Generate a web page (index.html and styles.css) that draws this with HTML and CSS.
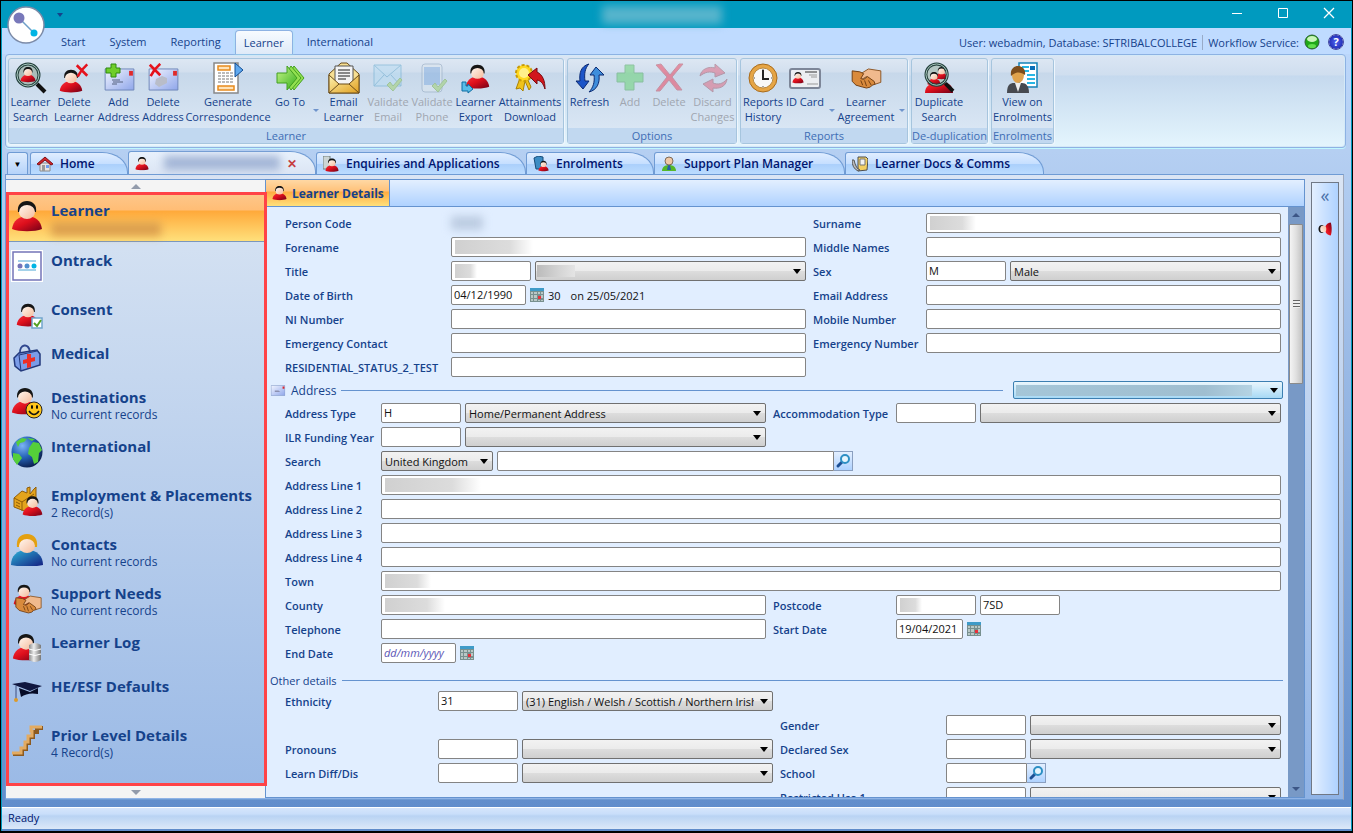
FILE: index.html
```
<!DOCTYPE html>
<html lang="en">
<head>
    <meta charset="UTF-8">
    <meta name="viewport" content="width=device-width, initial-scale=1.0">
    <title>Learner Details</title>
    <link rel="stylesheet" href="styles.css">
</head>
<body>
    <!-- shared icons -->
    <svg class="defs" width="0" height="0" aria-hidden="true">
        <defs>
            <linearGradient id="g-red" x1="0" y1="0" x2="1" y2="1">
                <stop offset="0" stop-color="#f8333c"/><stop offset=".45" stop-color="#dd0f1c"/><stop offset="1" stop-color="#700018"/>
            </linearGradient>
            <linearGradient id="g-face" x1="0" y1="0" x2="1" y2="1">
                <stop offset="0" stop-color="#fff6ee"/><stop offset="1" stop-color="#f5bb9a"/>
            </linearGradient>
            <linearGradient id="g-env" x1="0" y1="0" x2="1" y2="1">
                <stop offset="0" stop-color="#f2f5ff"/><stop offset="1" stop-color="#8fa6ea"/>
            </linearGradient>
            <linearGradient id="g-gold" x1="0" y1="0" x2="1" y2="1">
                <stop offset="0" stop-color="#fff3b0"/><stop offset="1" stop-color="#e0a020"/>
            </linearGradient>
            <linearGradient id="g-blue" x1="0" y1="0" x2="1" y2="1">
                <stop offset="0" stop-color="#2bb3d8"/><stop offset="1" stop-color="#141c80"/>
            </linearGradient>
            <linearGradient id="g-green" x1="0" y1="0" x2="1" y2="1">
                <stop offset="0" stop-color="#c8f58a"/><stop offset="1" stop-color="#35b01c"/>
            </linearGradient>
            <linearGradient id="g-grey" x1="0" y1="0" x2="1" y2="0">
                <stop offset="0" stop-color="#8b8b8b"/><stop offset=".4" stop-color="#ededed"/><stop offset="1" stop-color="#777"/>
            </linearGradient>
            <radialGradient id="g-globe" cx=".35" cy=".3" r=".75">
                <stop offset="0" stop-color="#7db4f5"/><stop offset=".5" stop-color="#2563b8"/><stop offset="1" stop-color="#0a1c4a"/>
            </radialGradient>
            <symbol id="person" viewBox="0 0 32 32">
                <path d="M1 29C2 21 8 16 16 16s14 5 15 13c-7 3-23 3-30 0z" fill="url(#g-red)"/>
                <path d="M7 12C6 5 10 1 16 1s10 4 9 11z" fill="#151515"/>
                <ellipse cx="16" cy="12" rx="8" ry="7" fill="url(#g-face)"/>
            </symbol>
            <symbol id="cross" viewBox="0 0 16 16">
                <path d="M2 2l12 12M14 1Q7 7 3 15" fill="none" stroke="#e5121c" stroke-width="3"/>
            </symbol>
            <symbol id="tick" viewBox="0 0 16 16">
                <path d="M1 9l3-3 3 4 7-8 2 2-9 11z" fill="#9ccf6a" stroke="#74ad4a"/>
            </symbol>
            <symbol id="envelope" viewBox="0 0 32 24">
                <path d="M1 1h30v22H1z" fill="url(#g-env)" stroke="#6f86b8"/>
                <path d="M26 3h4v5h-4z" fill="#e02a2a"/>
            </symbol>
            <symbol id="lens" viewBox="0 0 32 32">
                <path d="M22 22l8 8" stroke="#111" stroke-width="4"/>
                <circle cx="13" cy="13" r="11" fill="none" stroke="#24403c" stroke-width="3"/>
                <circle cx="13" cy="13" r="11" fill="none" stroke="#a9c8bf"/>
            </symbol>
            <symbol id="hands" viewBox="0 0 32 22">
                <path d="M31 3L18 1l-8 5-3 4 4 2 5-3 9 8 6-2z" fill="#f0b98d" stroke="#8a5424"/>
                <path d="M1 3l8 1 4 2-3 5 3 1 4-3 7 5 1 3-3 1-2 2-4 1-4-1-7-2-4-4H1z" fill="#d98a3c" stroke="#6f3d12"/>
                <path d="M10 13l2 5M14 13l2 6M18 13l3 5" stroke="#6f3d12" fill="none"/>
            </symbol>
            <symbol id="calendar" viewBox="0 0 14 14">
                <path d="M0 0h14v14H0z" fill="#78908f"/>
                <path d="M0 0h14v3H0z" fill="#3f9bc8"/>
                <path d="M1 4h2v2H1zM4 4h3v2H4zM8 4h2v2H8zM11 4h2v2h-2zM1 7h2v3H1zM4 7h3v3H4zM1 11h2v2H1zM4 11h3v2H4zM11 7h2v3h-2zM8 12h2v1H8zM11 12h2v1h-2z" fill="#b9c8c6"/>
                <path d="M8 8h3v3H8z" fill="#e8303a"/>
            </symbol>
            <symbol id="search" viewBox="0 0 16 16">
                <path d="M3 13l4-4" stroke="#1c4f94" stroke-width="3" stroke-linecap="round"/>
                <circle cx="10" cy="6" r="4" fill="#e6f5fd" stroke="#2d8fc4" stroke-width="2"/>
            </symbol>
        </defs>
    </svg>

    <div class="window">
        <header class="titlebar">
            <span class="quick-access"></span>
            <span class="smudge smudge-title"></span>
            <div class="window-buttons">
                <button type="button" aria-label="Minimise"><svg width="12" height="12"><path d="M1 6.500h10" stroke="#fff"/></svg></button>
                <button type="button" aria-label="Maximise"><svg width="12" height="12"><path d="M1.500 1.500h9v9h-9z" fill="none" stroke="#fff"/></svg></button>
                <button type="button" aria-label="Close"><svg width="12" height="12"><path d="M1 1l10 10M11 1L1 11" stroke="#fff" stroke-width="1.300"/></svg></button>
            </div>
        </header>
        <button class="app-button" type="button" aria-label="Application menu">
            <svg width="38" height="38" viewBox="0 0 38 38">
                <circle cx="19" cy="19" r="18" fill="#fff" stroke="#7c8ba8" stroke-width="1.500"/>
                <path d="M12 12l15 15" stroke="#6f9fc8" stroke-width="1.500"/>
                <circle cx="12" cy="12" r="5.500" fill="#7878ba"/><circle cx="27" cy="27" r="3.500" fill="#00b4e4"/>
            </svg>
        </button>

        <nav class="ribbon-tabs">
            <a href="#">Start</a>
            <a href="#">System</a>
            <a href="#">Reporting</a>
            <a href="#" class="active">Learner</a>
            <a href="#">International</a>
            <div class="session">
                <span>User: webadmin, Database: SFTRIBALCOLLEGE</span>
                <span class="service">Workflow Service:</span>
                <svg width="16" height="16" viewBox="0 0 16 16"><circle cx="8" cy="8" r="7" fill="#20a818" stroke="#2c5f30"/><ellipse cx="8" cy="5" rx="5" ry="3" fill="#c9f5b8"/><ellipse cx="8" cy="12" rx="4" ry="2" fill="#5fe04a"/></svg>
                <button class="help" type="button" aria-label="Help">?</button>
            </div>
        </nav>

        <div class="ribbon">
            <section class="group">
                <div class="tools tools-learner">
                    <button type="button"><svg viewBox="0 0 32 32"><circle cx="13" cy="13" r="10" fill="#a9bdb9"/><use href="#person" x="5" y="4" width="16" height="17"/><use href="#lens" width="32" height="32"/></svg>Learner<br>Search</button>
                    <button type="button"><svg viewBox="0 0 32 32"><use href="#person" x="1" y="7" width="24" height="24"/><use href="#cross" x="17" y="1" width="14" height="15"/></svg>Delete<br>Learner</button>
                    <button type="button"><svg viewBox="0 0 32 32"><use href="#envelope" x="1" y="6" width="31" height="23"/><path d="M9 18h8M10 20h10M9 22h5" stroke="#55617e"/><path d="M8 2h5v4h4v5h-4v4H8v-4H3V6h5z" fill="#6fce2b" stroke="#2f8a10"/></svg>Add<br>Address</button>
                    <button type="button"><svg viewBox="0 0 32 32"><use href="#envelope" x="1" y="6" width="31" height="23"/><path d="M9 17l6-3 5 2v5l-8 4-4-3z" fill="#b9bdc9"/><use href="#cross" x="1" y="1" width="14" height="14"/></svg>Delete<br>Address</button>
                    <button type="button"><svg viewBox="0 0 32 32"><path d="M2 1h24v30H2z" fill="#fff" stroke="#888" stroke-width="1.500"/><path d="M6 4h12v4H6zM6 24h16v4H6z" fill="#ffe3b8" stroke="#e88a1c" stroke-width="1.500"/><path d="M6 11h16M6 14h16M6 17h16M6 20h16" stroke="#777" stroke-dasharray="3 1"/><path d="M23 1l8 7-8 7z" fill="#5fa8ee" stroke="#104c94"/></svg>Generate<br>Correspondence</button>
                    <button type="button" class="has-menu"><svg viewBox="0 0 32 32"><path d="M20 4l10 12-10 12-2-3 7-9-7-9z" fill="#93e051" stroke="#43a020"/><path d="M17 4l10 12-10 12-2-3 7-9-7-9z" fill="#93e051" stroke="#43a020"/><path d="M3 11h10V4l10 12-10 12v-7H3z" fill="url(#g-green)" stroke="#43a020"/></svg>Go To</button>
                    <button type="button"><svg viewBox="0 0 32 32"><path d="M1 12L13 1h6l12 11v19H1z" fill="#f7df92" stroke="#6b4c1a"/><path d="M7 4h18v19H7z" fill="#f4f4f4" stroke="#555"/><path d="M10 8h12M10 11h12M10 14h12M10 17h8" stroke="#666" stroke-width="1.500"/><path d="M1 13l10 9h10l10-9v18H1z" fill="url(#g-gold)" stroke="#6b4c1a"/><path d="M1 31l10-9M31 31l-10-9" stroke="#6b4c1a"/></svg>Email<br>Learner</button>
                    <button type="button" disabled><svg viewBox="0 0 32 32"><path d="M2 3h27v21H2z" fill="#b8dcf2" stroke="#5fa6cc"/><path d="M2 3l13 12L29 3M2 24l10-11M29 24L19 13" fill="none" stroke="#5fa6cc"/><use href="#tick" x="13" y="14" width="18" height="16"/></svg>Validate<br>Email</button>
                    <button type="button" disabled><svg viewBox="0 0 32 32"><rect x="6" y="2" width="20" height="28" rx="3" fill="#dce6ee" stroke="#8aa0b8"/><path d="M8 5h16v18H8z" fill="#84aee0"/><use href="#tick" x="14" y="15" width="18" height="16"/></svg>Validate<br>Phone</button>
                    <button type="button"><svg viewBox="0 0 32 32"><use href="#person" x="5" y="2" width="25" height="25"/><path d="M2 20v9h6v2l5-4-5-5v2H6v-4z" fill="#59bce8" stroke="#0f6fa4"/></svg>Learner<br>Export</button>
                    <button type="button"><svg viewBox="0 0 32 32"><path d="M6 16L2 27l4-1 3 3 2-10 4 9 2-3-4-9z" fill="#f0c21a" stroke="#a98205"/><circle cx="10" cy="11" r="8" fill="#ffd81f" stroke="#c79a08" stroke-width="2" stroke-dasharray="3 2"/><circle cx="10" cy="11" r="5" fill="#fff08a"/><path d="M14 13l9-7v4c6 3 8 9 8 17-2-6-4-8-8-9v4z" fill="#d2161c" stroke="#780a10"/></svg>Attainments<br>Download</button>
                </div>
                <h2>Learner</h2>
            </section>
            <section class="group">
                <div class="tools tools-options">
                    <button type="button"><svg viewBox="0 0 32 32"><path d="M15 2C7 4 5 11 6 19H2l7 8 6-8h-4c-1-7 0-13 4-17z" fill="#1c55c8" stroke="#0c2a72"/><path d="M15 30c8-2 11-9 10-17h5L22 5l-6 8h4c1 7-1 13-5 17z" fill="#3f8edc" stroke="#0c2a72"/></svg>Refresh</button>
                    <button type="button" disabled><svg viewBox="0 0 32 32"><path d="M11 3h9v8h9v9h-9v8h-9v-8H3v-9h8z" fill="#62d46c" stroke="#4aa558"/></svg>Add</button>
                    <button type="button" disabled><svg viewBox="0 0 32 32"><path d="M3 3l5-1 9 11 9-11h4L19 15l10 13h-5l-8-10-9 11H3l11-14z" fill="#f03a55" stroke="#b84a5a"/></svg>Delete</button>
                    <button type="button" disabled><svg viewBox="0 0 32 32"><path d="M3 14c1-7 9-10 15-8V2l10 9-10 4v-4c-5-2-10-1-15 3z" fill="#e0607a" stroke="#9a5666"/><path d="M30 17c-1 8-8 10-14 9v4L6 22l10-5v4c5 2 10 1 14-4z" fill="#e0607a" stroke="#9a5666"/></svg>Discard<br>Changes</button>
                </div>
                <h2>Options</h2>
            </section>
            <section class="group">
                <div class="tools tools-reports">
                    <button type="button"><svg viewBox="0 0 32 32"><circle cx="16" cy="16" r="14" fill="#e6a545" stroke="#a86b1c"/><circle cx="16" cy="16" r="10" fill="#f8f8f8" stroke="#b98a44"/><path d="M16 8v9h6" fill="none" stroke="#222" stroke-width="2"/><path d="M16 7v1M16 24v1M7 16h1M24 16h1" stroke="#555"/></svg>Reports<br>History</button>
                    <button type="button" class="has-menu"><svg viewBox="0 0 32 32"><rect x="1" y="7" width="30" height="19" rx="2" fill="#eceef2" stroke="#7d8698" stroke-width="2"/><use href="#person" x="3" y="9" width="12" height="13"/><path d="M16 10h12" stroke="#333"/><path d="M20 13h8M22 15h6M18 22h11" stroke="#999"/></svg>ID Card</button>
                    <button type="button" class="has-menu"><svg viewBox="0 0 32 32"><use href="#hands" x="1" y="6" width="31" height="21"/></svg>Learner<br>Agreement</button>
                </div>
                <h2>Reports</h2>
            </section>
            <section class="group">
                <div class="tools tools-duplicates">
                    <button type="button"><svg viewBox="0 0 32 32"><path d="M2 31c0-7 5-10 12-10h9c5 1 7 5 7 10z" fill="url(#g-red)"/><circle cx="14" cy="13" r="11" fill="#b3c6c3"/><use href="#person" x="12" y="3" width="13" height="16"/><use href="#person" x="4" y="9" width="14" height="15"/><use href="#lens" x="1" width="31" height="31"/></svg>Duplicate<br>Search</button>
                </div>
                <h2>De-duplication</h2>
            </section>
            <section class="group">
                <div class="tools tools-enrolments">
                    <button type="button"><svg viewBox="0 0 32 32"><path d="M13 1h18v24H13z" fill="#fff" stroke="#1682b8" stroke-width="1.500"/><path d="M16 5h7M16 9h7M21 13h8M21 17h8M21 21h8" stroke="#27b6e4" stroke-width="2"/><path d="M24 4h5v4h-5z" fill="#0c6fb8"/><path d="M1 31c0-8 3-10 7-10h8c4 0 7 3 7 10z" fill="#474a50"/><path d="M9 21h6l-3 9z" fill="#eee"/><ellipse cx="12" cy="13" rx="6" ry="8" fill="#e0a24c"/><path d="M5 14C4 7 8 4 12 4s8 3 7 9c-4-3-9-4-14 1z" fill="#7d4d1c"/></svg>View on<br>Enrolments</button>
                </div>
                <h2>Enrolments</h2>
            </section>
        </div>

        <nav class="doc-tabs">
            <button type="button" class="doc-list" aria-label="Open documents">▼</button>
            <a href="#" class="doc-tab doc-home"><svg viewBox="0 0 16 16"><path d="M3 7h10v8H3z" fill="#e9e4e0" stroke="#8a8a8a"/><path d="M0 8l8-7 8 7-2 1-6-5-6 5z" fill="#d3252b" stroke="#7e1014"/><path d="M5 9h3v6H5z" fill="#9a9a9a"/><path d="M9 9h3v3H9z" fill="#6f9fee"/></svg>Home</a>
            <a href="#" class="doc-tab doc-person active"><svg viewBox="0 0 16 16"><use href="#person" width="16" height="16"/></svg><span class="smudge smudge-tab"></span><span class="close">✕</span></a>
            <a href="#" class="doc-tab doc-enquiries"><svg viewBox="0 0 16 16"><path d="M0 0h7v13H0z" fill="#ccd5d5" stroke="#72807f"/><use href="#person" x="2" y="2" width="14" height="14"/></svg>Enquiries and Applications</a>
            <a href="#" class="doc-tab doc-enrolments"><svg viewBox="0 0 16 16"><path d="M1 2l4-2 5 1v12H3z" fill="#3c8cc4" stroke="#174b78"/><use href="#person" x="5" y="4" width="11" height="12"/></svg>Enrolments</a>
            <a href="#" class="doc-tab doc-support"><svg viewBox="0 0 16 16"><path d="M1 15c0-4 3-6 7-6s7 2 7 6z" fill="#55b82a"/><path d="M7 9h2l1 5H6z" fill="#2560a8"/><circle cx="8" cy="5" r="4" fill="#f0c8a6" stroke="#7d6a58"/></svg>Support Plan Manager</a>
            <a href="#" class="doc-tab doc-comms"><svg viewBox="0 0 16 16"><path d="M6 1h8l2 2-1 11-9 1z" fill="#f3cf62" stroke="#4d4d4d"/><path d="M8 3h5v6H8z" fill="#f2f2f2" stroke="#777"/><path d="M2 4q2 9 6 10l-2 1q-6-3-6-11z" fill="#bbb" stroke="#555"/></svg>Learner Docs &amp; Comms</a>
        </nav>

        <main class="workspace">
            <aside class="sidebar">
                <button type="button" class="scroller" aria-label="Scroll up"><span class="arrow-up"></span></button>
                <nav class="sections">
                    <a href="#" class="active"><svg viewBox="0 0 32 32"><use href="#person" width="32" height="32"/></svg><span><b>Learner</b><i class="smudge smudge-nav"></i></span></a>
                    <a href="#"><svg viewBox="0 0 32 32"><path d="M1 1h30v30H1z" fill="#fff" stroke="#fff" stroke-width="2"/><path d="M2 2h28v28H2z" fill="#fff" stroke="#7474b8" stroke-width="1.500"/><path d="M7 11h18M7 20h18" stroke="#4aa6d4"/><circle cx="9" cy="16" r="2.500" fill="#7474b8"/><circle cx="16" cy="16" r="2.500" fill="#4f8fce"/><circle cx="23" cy="16" r="2.500" fill="#00b4e4"/></svg><span><b>Ontrack</b></span></a>
                    <a href="#" class="short"><svg viewBox="0 0 32 32"><use href="#person" x="5" y="3" width="24" height="26"/><path d="M21 19h10v10H21z" fill="#fff" stroke="#71a5cb" stroke-width="1.500"/><path d="M23 24l3 3 4-6" fill="none" stroke="#55a022" stroke-width="2"/></svg><span><b>Consent</b></span></a>
                    <a href="#" class="short"><svg viewBox="0 0 32 32"><path d="M9 11c-1-10 9-12 10-2" fill="none" stroke="#31488f" stroke-width="2"/><path d="M3 15l5-5 18-3 3 4v11l-19 6-6-5z" fill="#7b9ce8" stroke="#23397c" stroke-width="1.500"/><path d="M8 12l2 16M8 12l18-4" fill="none" stroke="#23397c"/><path d="M16 11h4v4l4-1v4l-4 1v5l-4 1v-5l-4 1v-4l4-1z" fill="#ee2e26"/></svg><span><b>Medical</b></span></a>
                    <a href="#"><svg viewBox="0 0 32 32"><use href="#person" x="0" y="0" width="28" height="28"/><circle cx="23" cy="23" r="8" fill="#ffc61a" stroke="#222"/><path d="M18 24q5 7 10 0" fill="none" stroke="#111" stroke-width="1.500"/><ellipse cx="21" cy="20" rx="1" ry="2"/><ellipse cx="26" cy="20" rx="1" ry="2"/></svg><span><b>Destinations</b><small>No current records</small></span></a>
                    <a href="#"><svg viewBox="0 0 32 32"><circle cx="16" cy="16" r="15.500" fill="url(#g-globe)"/><path d="M5 6l6-4 5 1-3 3-4 1-2 4zM2 17l6 1 3 4-5 7-4-6zM18 12l4-6 6 1 3 7-3 3-1 9-4 2-2-7-4-3zM16 2l8 1-3 2z" fill="#55cf3a"/></svg><span><b>International</b></span></a>
                    <a href="#"><svg viewBox="0 0 32 32"><path d="M3 13l8-7 5 2V3l3-1v7l4-5 2-2v16l-9 9-13-5z" fill="#e4a41c" stroke="#8f5c08"/><path d="M3 13l8 4v9M11 17l12-8M5 17l4 2M5 20l4 2" fill="none" stroke="#8f5c08"/><use href="#person" x="11" y="10" width="21" height="22"/></svg><span><b>Employment &amp; Placements</b><small>2 Record(s)</small></span></a>
                    <a href="#"><svg viewBox="0 0 32 32"><path d="M0 31c0-9 6-15 16-15s16 6 16 15c-8 2-24 2-32 0z" fill="url(#g-blue)"/><path d="M6 13C5 5 9 0 16 0s11 5 10 13z" fill="#e3a010"/><ellipse cx="16" cy="12" rx="8" ry="7" fill="url(#g-face)"/></svg><span><b>Contacts</b><small>No current records</small></span></a>
                    <a href="#"><svg viewBox="0 0 32 32"><use href="#person" x="2" y="1" width="22" height="22"/><use href="#hands" x="4" y="12" width="27" height="19"/></svg><span><b>Support Needs</b><small>No current records</small></span></a>
                    <a href="#" class="short"><svg viewBox="0 0 32 32"><use href="#person" x="1" y="1" width="28" height="28"/><path d="M18 13q6-4 12 0v15q-6 4-12 0z" fill="url(#g-grey)"/><path d="M18 17q6 3 12 0M18 22q6 3 12 0" fill="none" stroke="#fff"/></svg><span><b>Learner Log</b></span></a>
                    <a href="#"><svg viewBox="0 0 32 32"><path d="M1 8l13-2 17 4-12 5z" fill="#10173f"/><path d="M8 12l11 4 8-4v6q-10-2-17 3z" fill="#060b26"/><path d="M5 10v14" stroke="#3c4f80"/><circle cx="5" cy="24" r="2" fill="#dc9a2a"/></svg><span><b>HE/ESF Defaults</b></span></a>
                    <a href="#"><svg viewBox="0 0 32 32"><path d="M2 29h9v-5h4v-6h3v-6h4V7h4V3h6" fill="none" stroke="#8c5a20" stroke-width="4"/><path d="M1 28h9v-5h4v-6h3v-6h4V6h-1V2h11" fill="none" stroke="#e3ab62" stroke-width="3"/></svg><span><b>Prior Level Details</b><small>4 Record(s)</small></span></a>
                </nav>
                <button type="button" class="scroller" aria-label="Scroll down"><span class="arrow-down"></span></button>
                <div class="highlight"></div>
            </aside>

            <section class="detail">
                <div class="detail-tabs">
                    <a href="#"><svg viewBox="0 0 16 16"><use href="#person" width="16" height="16"/></svg>Learner Details</a>
                </div>
                <div class="detail-body">
                    <form class="form">
                        <div class="fields fields-learner">
                            <span class="label">Person Code</span>
                            <div class="cell"><span class="smudge smudge-code"></span></div>
                            <label for="surname" class="right">Surname</label>
                            <div class="cell"><input id="surname" type="text" class="hidden-value w-40"></div>

                            <label for="forename">Forename</label>
                            <div class="cell"><input id="forename" type="text" class="hidden-value w-75"></div>
                            <label for="middle" class="right">Middle Names</label>
                            <div class="cell"><input id="middle" type="text"></div>

                            <label for="title-code">Title</label>
                            <div class="cell"><input id="title-code" type="text" class="code hidden-value w-20"><select aria-label="Title" class="hidden-choice"><option></option></select></div>
                            <label for="sex" class="right">Sex</label>
                            <div class="cell"><input id="sex" type="text" class="code" value="M"><select aria-label="Sex"><option>Male</option></select></div>

                            <label for="dob">Date of Birth</label>
                            <div class="cell"><input id="dob" type="text" class="date" value="04/12/1990"><button type="button" class="pick" aria-label="Pick date"><svg><use href="#calendar"/></svg></button><span class="age">30</span><span class="on">on 25/05/2021</span></div>
                            <label for="email" class="right">Email Address</label>
                            <div class="cell"><input id="email" type="text"></div>

                            <label for="ni">NI Number</label>
                            <div class="cell"><input id="ni" type="text"></div>
                            <label for="mobile" class="right">Mobile Number</label>
                            <div class="cell"><input id="mobile" type="text"></div>

                            <label for="em-contact">Emergency Contact</label>
                            <div class="cell"><input id="em-contact" type="text"></div>
                            <label for="em-number" class="right">Emergency Number</label>
                            <div class="cell"><input id="em-number" type="text"></div>

                            <label for="res-status">RESIDENTIAL_STATUS_2_TEST</label>
                            <div class="cell"><input id="res-status" type="text"></div>
                        </div>

                        <div class="heading heading-address">
                            <svg viewBox="0 0 32 24"><use href="#envelope" width="32" height="24"/><path d="M9 12h8l4 3H9z" fill="#8b90b0"/></svg>
                            <h3>Address</h3><hr>
                            <select aria-label="Address" class="address-choice"><option></option></select>
                        </div>
                        <div class="fields fields-address">
                            <label for="addr-type">Address Type</label>
                            <div class="cell"><input id="addr-type" type="text" class="code" value="H"><select aria-label="Address Type"><option>Home/Permanent Address</option></select></div>
                            <label for="accom" class="right">Accommodation Type</label>
                            <div class="cell"><input id="accom" type="text" class="code"><select aria-label="Accommodation Type"><option></option></select></div>

                            <label for="ilr">ILR Funding Year</label>
                            <div class="cell"><input id="ilr" type="text" class="code"><select aria-label="ILR Funding Year"><option></option></select></div>

                            <label for="addr-search" class="first">Search</label>
                            <div class="cell cell-wide"><select aria-label="Country" class="country"><option>United Kingdom</option></select><div class="lookup"><input id="addr-search" type="text"><button type="button" aria-label="Search"><svg><use href="#search"/></svg></button></div></div>

                            <label for="line1">Address Line 1</label>
                            <div class="cell cell-wide"><input id="line1" type="text" class="hidden-value w-90"></div>
                            <label for="line2">Address Line 2</label>
                            <div class="cell cell-wide"><input id="line2" type="text"></div>
                            <label for="line3">Address Line 3</label>
                            <div class="cell cell-wide"><input id="line3" type="text"></div>
                            <label for="line4">Address Line 4</label>
                            <div class="cell cell-wide"><input id="line4" type="text"></div>
                            <label for="town">Town</label>
                            <div class="cell cell-wide"><input id="town" type="text" class="hidden-value w-40"></div>

                            <label for="county">County</label>
                            <div class="cell"><input id="county" type="text" class="hidden-value w-60"></div>
                            <label for="postcode" class="right">Postcode</label>
                            <div class="cell"><input id="postcode" type="text" class="code hidden-value w-20"><input type="text" class="code" aria-label="Postcode, second part" value="7SD"></div>

                            <label for="phone">Telephone</label>
                            <div class="cell"><input id="phone" type="text"></div>
                            <label for="start" class="right">Start Date</label>
                            <div class="cell"><input id="start" type="text" class="start" value="19/04/2021"><button type="button" class="pick" aria-label="Pick date"><svg><use href="#calendar"/></svg></button></div>

                            <label for="end">End Date</label>
                            <div class="cell"><input id="end" type="text" class="date" placeholder="dd/mm/yyyy"><button type="button" class="pick" aria-label="Pick date"><svg><use href="#calendar"/></svg></button></div>
                        </div>

                        <div class="heading heading-other"><h3>Other details</h3><hr></div>
                        <div class="fields fields-other">
                            <label for="ethnicity">Ethnicity</label>
                            <div class="cell"><input id="ethnicity" type="text" class="code" value="31"><select aria-label="Ethnicity"><option>(31) English / Welsh / Scottish / Northern Irish / British</option></select></div>
                            <div class="blank"></div>

                            <label for="gender" class="right alone">Gender</label>
                            <div class="cell"><input id="gender" type="text" class="code"><select aria-label="Gender"><option></option></select></div>

                            <label for="pronouns">Pronouns</label>
                            <div class="cell"><input id="pronouns" type="text" class="code"><select aria-label="Pronouns"><option></option></select></div>
                            <label for="declared" class="right">Declared Sex</label>
                            <div class="cell"><input id="declared" type="text" class="code"><select aria-label="Declared Sex"><option></option></select></div>

                            <label for="diff">Learn Diff/Dis</label>
                            <div class="cell"><input id="diff" type="text" class="code"><select aria-label="Learn Diff/Dis"><option></option></select></div>
                            <label for="school" class="right">School</label>
                            <div class="cell"><div class="lookup lookup-code"><input id="school" type="text"><button type="button" aria-label="Find school"><svg><use href="#search"/></svg></button></div></div>

                            <label for="restricted" class="right alone">Restricted Use 1</label>
                            <div class="cell"><input id="restricted" type="text" class="code"><select aria-label="Restricted Use 1"><option></option></select></div>
                        </div>
                    </form>
                    <div class="scrollbar">
                        <span class="arrow-up"></span>
                        <div class="thumb"><i></i></div>
                        <span class="arrow-down"></span>
                    </div>
                </div>
            </section>

            <aside class="rail">
                <button type="button" aria-label="Expand">«</button>
                <svg viewBox="0 0 16 16"><use href="#person" width="16" height="16" transform="rotate(-90 8 8)"/></svg>
            </aside>
        </main>

        <footer class="status">Ready</footer>
    </div>
</body>
</html>
```
FILE: styles.css
```
* {
    box-sizing: border-box;
}
body {
    margin: 0;
    background: #000;
    font-family: "Open Sans", "Noto Sans", sans-serif;
    font-size: 11px;
    color: #15428b;
}
a {
    color: inherit;
    text-decoration: none;
}
button, input, select {
    font: inherit;
    color: inherit;
    margin: 0;
}
button {
    padding: 0;
    border: 0;
    background: none;
}
h2, h3, hr {
    margin: 0;
    font-weight: normal;
}
.defs {
    position: absolute;
}
.window {
    position: relative;
    display: flex;
    flex-direction: column;
    height: 100vh;
    border: 1px solid #000;
    border-bottom-width: 2px;
    background: linear-gradient(#bfdbff, #b5cff2 150px, #5f8bca);
    box-shadow: inset 1px 0 #009abf, inset -1px 0 #009abf;
}

/* blanked-out personal data */
.smudge {
    display: block;
    height: 14px;
    filter: blur(4px);
    background: #93a5bf;
}
.smudge-title {
    width: 120px;
    height: 18px;
    margin: 0 auto;
    background: #56b4cc;
}
.smudge-tab {
    width: 116px;
    margin-left: 8px;
    background: #a3b5d6;
}
.smudge-nav {
    width: 110px;
    margin-top: 2px;
    background: #dc9f4e;
}
.smudge-code {
    width: 32px;
    background: #bccce2;
}

/* title bar */
.titlebar {
    display: flex;
    align-items: center;
    flex: 0 0 27px;
    padding-left: 56px;
    background: #009abf;
}
.quick-access {
    width: 6px;
    margin-right: 46px;
    border-top: 4px solid #15428b;
    border-left: 3px solid transparent;
    border-right: 3px solid transparent;
}
.window-buttons {
    display: flex;
}
.window-buttons button {
    width: 46px;
    height: 27px;
}
.app-button {
    position: absolute;
    left: 6px;
    top: 5px;
    width: 38px;
    height: 38px;
}

/* ribbon */
.ribbon-tabs {
    display: flex;
    align-items: center;
    flex: 0 0 25px;
    padding: 2px 7px 0 47px;
    margin: 0 1px;
    background: #bfdbff;
}
.ribbon-tabs > a {
    padding: 0 12px;
    line-height: 22px;
}
.ribbon-tabs .active {
    position: relative;
    z-index: 1;
    margin: 0 2px;
    padding: 0 8px;
    line-height: 23px;
    border: 1px solid #8db2e3;
    border-bottom: 0;
    border-radius: 4px 4px 0 0;
    background: linear-gradient(#f7fbff, #dfeaf8);
    box-shadow: 0 0 3px #a8e4f0;
}
.session {
    display: flex;
    align-items: center;
    gap: 5px;
    margin-left: auto;
    font-weight: 500;
}
.service {
    padding-left: 5px;
    border-left: 1px solid #98abc8;
}
.help {
    width: 16px;
    height: 16px;
    margin-left: 3px;
    border: 1px solid #fff;
    border-radius: 50%;
    outline: 1px solid #3b45a0;
    outline-offset: -1px;
    background: radial-gradient(#4f63f0, #101aa0);
    color: #fff;
    font-weight: 700;
    line-height: 14px;
}
.ribbon {
    display: flex;
    gap: 3px;
    flex: 0 0 94px;
    margin: 0 6px 0 4px;
    padding: 3px 2px;
    border: 1px solid #8db2e3;
    border-radius: 4px;
    background: linear-gradient(#dbe6f4, #cfdeef 20px, #c5d9ee 21px, #e4f5fd);
    box-shadow: inset 0 0 0 1px #d4e9f7, 0 1px #c0f8ff;
}
.group {
    display: flex;
    flex-direction: column;
    border: 1px solid #a6c5de;
    border-radius: 3px;
    background: linear-gradient(#dde7f3, #d2dfee 13px, #c7d8ea 14px, #d9e6f4 70px);
    box-shadow: 1px 1px #eef6fd;
}
.group h2 {
    background: #c1d8f0;
    color: #3e6db5;
    font-size: 11px;
    line-height: 15px;
    text-align: center;
}
.tools {
    display: grid;
    flex: 1;
    padding-top: 3px;
}
.tools-learner {
    grid-template-columns: 43px 44px 45px 44px 86px 50px 45px 44px 44px 43px 66px;
}
.tools-options {
    grid-template-columns: 43px 38px 40px 47px;
}
.tools-reports {
    grid-template-columns: 44px 52px 70px;
}
.tools-duplicates {
    grid-template-columns: 54px;
    padding-right: 18px;
}
.tools-enrolments {
    grid-template-columns: 61px;
}
.tools button {
    position: relative;
    display: block;
    text-align: center;
    line-height: 15px;
    align-self: start;
    white-space: nowrap;
}
.tools svg {
    display: block;
    width: 32px;
    height: 32px;
    margin: 0 auto;
}
.tools .has-menu {
    padding-right: 12px;
}
.has-menu::after {
    content: "";
    position: absolute;
    right: 2px;
    top: 47px;
    border-top: 3px solid #6f94cc;
    border-left: 3px solid transparent;
    border-right: 3px solid transparent;
}
.tools button:disabled {
    color: #a0a6b0;
}
.tools button:disabled svg {
    opacity: .5;
}

/* document tabs */
.doc-tabs {
    display: flex;
    align-items: flex-end;
    flex: 0 0 26px;
    padding-left: 6px;
}
.doc-list {
    width: 21px;
    height: 22px;
    margin-right: 2px;
    border: 1px solid #6f9bd4;
    border-bottom: 0;
    border-radius: 3px 3px 0 0;
    background: linear-gradient(#dfecfd, #b5d3fa);
    color: #000;
    font-size: 8px;
}
.doc-tab {
    display: flex;
    align-items: center;
    gap: 7px;
    height: 22px;
    padding-left: 6px;
    border: 1px solid #6f9bd4;
    border-bottom: 0;
    border-radius: 3px 26px 0 0 / 3px 20px 0 0;
    background: linear-gradient(#e0edff, #c6dfff 50%, #aacffb 51%, #bcdcff);
    font-size: 12px;
    font-weight: 600;
    color: #00156e;
    white-space: nowrap;
}
.doc-tab svg {
    width: 16px;
    height: 16px;
}
.doc-tab.active {
    height: 23px;
    background: linear-gradient(#e8f1fc, #dbe5f4);
}
.doc-home {
    width: 98px;
}
.doc-person {
    width: 188px;
}
.doc-person svg {
    width: 14px;
    height: 15px;
}
.doc-enquiries {
    width: 210px;
}
.doc-enrolments {
    width: 128px;
}
.doc-support {
    width: 191px;
}
.doc-comms {
    width: 199px;
}
.close {
    color: #c63f3f;
    font-size: 12px;
}

/* workspace */
.workspace {
    display: flex;
    flex: 1;
    min-height: 0;
    margin: 0 8px 7px 4px;
    padding: 4px 4px 1px 0;
    border: 1px solid #6f9bd4;
    border-right-color: #a0aabc;
    background: linear-gradient(#dbe5f4, #b5cdee 50%, #8fb3e6);
}
.sidebar {
    position: relative;
    display: flex;
    flex-direction: column;
    flex: 0 0 259px;
}
.scroller {
    flex: 0 0 13px;
    display: flex;
    align-items: center;
    justify-content: center;
    border-top: 1px solid #6f9bd4;
    background: #f4f4f4;
}
.arrow-up, .arrow-down {
    border: 5px solid transparent;
    border-bottom-color: #929bab;
    border-top-width: 0;
}
.arrow-down {
    border-width: 5px 5px 0;
    border-top-color: #929bab;
}
.sections {
    flex: 1;
    min-height: 0;
    overflow: hidden;
    background: linear-gradient(#d8e4f3, #9bbae6);
}
.sections a {
    display: flex;
    gap: 8px;
    height: 49px;
    padding: 8px 5px 0;
}
.sections .short {
    height: 44px;
}
.sections .active {
    height: 50px;
    border-bottom: 1px solid #7b97bd;
    background: linear-gradient(#fdc88d, #ffbd75 18px, #ffa93a 19px, #ffe07b);
}
.sections svg {
    flex: none;
    width: 32px;
    height: 32px;
}
.sections b {
    display: block;
    font-size: 15px;
    line-height: 20px;
    white-space: nowrap;
}
.sections small {
    display: block;
    font-size: 12px;
    line-height: 16px;
}
.highlight {
    position: absolute;
    inset: 13px -2px 12px 0;
    z-index: 1;
    border: 3px solid #ff4347;
}
.detail {
    display: flex;
    flex-direction: column;
    flex: 1;
    min-width: 0;
    border: 1px solid #6593cf;
    background: #e1eeff;
}
.detail-tabs {
    flex: 0 0 27px;
    border-bottom: 1px solid #6593cf;
    background: linear-gradient(#e3efff, #afd2ff);
}
.detail-tabs a {
    display: inline-flex;
    align-items: center;
    gap: 5px;
    height: 26px;
    padding: 0 5px 0 6px;
    border-right: 1px solid #6593cf;
    background: linear-gradient(#ffd8a4, #ffc27a 11px, #ffac42 12px, #ffe07b);
    font-size: 12px;
    font-weight: 700;
}
.detail-tabs svg {
    width: 15px;
    height: 16px;
}
.detail-body {
    display: flex;
    flex: 1;
    min-height: 0;
}
.form {
    flex: 1;
    min-width: 0;
    overflow: hidden;
    padding: 6px 7px 0 4px;
}
.fields {
    display: grid;
    grid-auto-rows: 20px;
    row-gap: 4px;
    padding-left: 15px;
}
.fields-learner {
    grid-template-columns: 166px 1fr 120px 1fr;
}
.fields-address {
    grid-template-columns: 96px 1fr 130px 1fr;
}
.fields-other {
    grid-template-columns: 153px 1fr 173px 1fr;
}
label, .label {
    line-height: 22px;
    font-weight: 600;
    white-space: nowrap;
}
.right {
    padding-left: 7px;
}
.first {
    grid-column: 1;
}
.alone {
    grid-column: 3;
}
.blank {
    grid-column: 3 / 5;
}
.cell {
    display: flex;
    align-items: center;
    gap: 4px;
    min-width: 0;
}
.cell-wide {
    grid-column: 2 / 5;
}
input, select {
    flex: 1;
    min-width: 0;
    width: 100%;
    height: 20px;
    border: 1px solid #848484;
    border-radius: 2px;
    background: #fff;
    color: #111;
}
input {
    padding: 0 2px 1px;
}
input::placeholder {
    color: #5a55b5;
    font-style: italic;
}
select {
    appearance: none;
    padding: 0 18px 0 3px;
    border-color: #707070;
    background: url("data:image/svg+xml,%3Csvg xmlns='http://www.w3.org/2000/svg' width='8' height='5'%3E%3Cpath d='M0 0h8L4 5z'/%3E%3C/svg%3E") no-repeat right 4px center, linear-gradient(#f2f2f2, #ebebeb 50%, #dddddd 51%, #cfcfcf);
}
.code {
    flex: 0 0 80px;
}
.date {
    flex: 0 0 75px;
}
.start {
    flex: 0 0 67px;
}
.country {
    flex: 0 0 112px;
}
.hidden-value {
    background: linear-gradient(90deg, #d0d0d0, #dcdcdc 70%, #fff) no-repeat 3px 2px #fff;
}
.w-20 {
    background-size: 22px 14px;
}
.w-40 {
    background-size: 46px 14px;
}
.w-60 {
    background-size: 60px 14px;
}
.w-75 {
    background-size: 78px 14px;
}
.w-90 {
    background-size: 96px 14px;
}
.pick svg {
    display: block;
    width: 14px;
    height: 14px;
}
.age, .on {
    color: #111;
}
.on {
    margin-left: 6px;
}
.lookup {
    display: flex;
    flex: 0 0 356px;
}
.lookup-code {
    flex-basis: 100px;
}
.lookup input {
    border-radius: 2px 0 0 2px;
}
.lookup button {
    flex: 0 0 19px;
    height: 20px;
    border: 1px solid #8a9fc0;
    border-left: 0;
    background: linear-gradient(#e3efff, #afd2ff);
}
.lookup svg {
    display: block;
    width: 16px;
    height: 16px;
    margin: 0 auto;
}
.heading {
    display: flex;
    align-items: center;
    height: 20px;
    margin: 3px -2px 3px 0;
}
.heading svg {
    width: 16px;
    height: 11px;
    margin-right: 5px;
}
.heading h3 {
    margin-right: 5px;
    font-size: 12px;
}
.heading hr {
    flex: 1;
    border: 0;
    border-top: 1px solid #6593cf;
}
.heading-other {
    margin: 7px -2px 1px 0;
}
.heading-other h3 {
    font-size: 11px;
}
.address-choice {
    flex: 0 0 270px;
    height: 18px;
    margin-left: 10px;
    border-color: #3c7fb1;
    background: url("data:image/svg+xml,%3Csvg xmlns='http://www.w3.org/2000/svg' width='8' height='5'%3E%3Cpath d='M0 0h8L4 5z'/%3E%3C/svg%3E") no-repeat right 4px center, linear-gradient(90deg, #a5c6d8, #9fbed0 80%, #b5d3e3) no-repeat 2px 3px / 236px 11px, linear-gradient(#eaf6fd, #a7d9f5);
}
.hidden-choice {
    background: url("data:image/svg+xml,%3Csvg xmlns='http://www.w3.org/2000/svg' width='8' height='5'%3E%3Cpath d='M0 0h8L4 5z'/%3E%3C/svg%3E") no-repeat right 4px center, linear-gradient(90deg, #bbb, #d5d5d5 60%, #e4e4e4) no-repeat 1px 3px / 38px 12px, linear-gradient(#f2f2f2, #ebebeb 50%, #dddddd 51%, #cfcfcf);
}
.scrollbar {
    display: flex;
    flex-direction: column;
    align-items: center;
    flex: 0 0 16px;
    padding: 6px 1px;
    background: #7899c6;
}
.scrollbar .arrow-up, .scrollbar .arrow-down {
    border-width: 0 4px 4px;
    border-bottom-color: #3c5686;
}
.scrollbar .arrow-down {
    border-width: 4px 4px 0;
    border-top-color: #3c5686;
    margin-top: auto;
}
.thumb {
    display: flex;
    align-items: center;
    justify-content: center;
    width: 14px;
    height: 160px;
    margin-top: 7px;
    border: 1px solid #8b8b8b;
    border-radius: 1px;
    background: linear-gradient(90deg, #f4f4f4, #e0e0e0 50%, #c4c4c4);
}
.thumb i {
    width: 7px;
    height: 8px;
    background: repeating-linear-gradient(#666 0 1px, #eee 1px 3px);
}
.rail {
    display: flex;
    flex-direction: column;
    align-items: center;
    gap: 15px;
    flex: 0 0 28px;
    margin: 3px 0 3px 6px;
    border: 1px solid #707885;
    background: linear-gradient(90deg, #e3efff, #afd2ff);
}
.rail button {
    color: #4a70a8;
    font-size: 18px;
    line-height: 24px;
}
.rail svg {
    width: 14px;
    height: 14px;
}
.status {
    flex: 0 0 22px;
    margin: 0 1px 2px;
    padding-left: 6px;
    border-top: 1px solid #fff;
    background: linear-gradient(#d5e5fb, #c9defa 6px, #b9d3f3 8px, #dce8f8);
    line-height: 20px;
    color: #00156e;
}
```
